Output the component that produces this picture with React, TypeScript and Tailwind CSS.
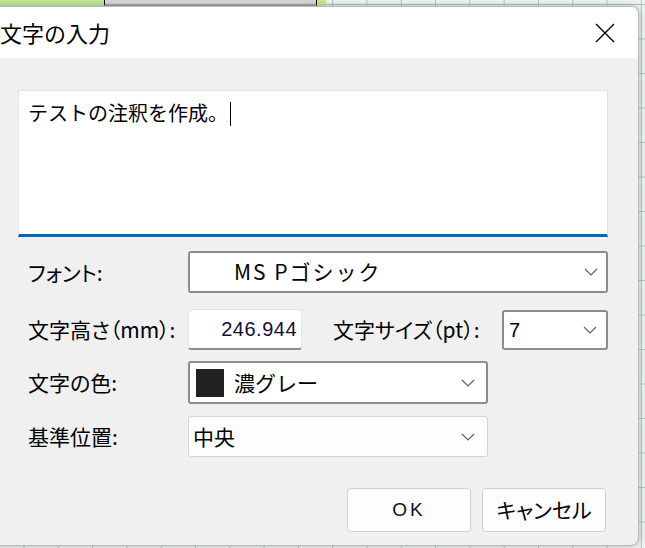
const jp = "font-['Noto_Sans_CJK_JP','Noto_Sans',sans-serif]";
const palt = "[font-feature-settings:'palt']";

// 細い下向きシェブロン（Windows のコンボボックス風）
const Chevron = () => (
  <svg width="14" height="8" viewBox="0 0 14 8" fill="none" aria-hidden>
    <path d="M1 1l6 6 6-6" stroke="#5f5f5f" strokeWidth="1.2" />
  </svg>
);

const CloseIcon = () => (
  <svg width="20" height="20" viewBox="0 0 20 20" fill="none" aria-hidden>
    <path d="M1 1l18 18M19 1L1 19" stroke="#000" strokeWidth="1.4" />
  </svg>
);

const Label = ({ children }: { children: React.ReactNode }) => (
  <span className={`w-[170px] shrink-0 pl-[10px] text-[21px] leading-none text-black ${palt}`}>{children}</span>
);

export default function App() {
  return (
    <div
      className={`relative h-[548px] w-[645px] overflow-hidden bg-[#eef3ef] bg-[linear-gradient(to_right,#a9c4b6_1px,transparent_1px),linear-gradient(to_bottom,#a9c4b6_1px,transparent_1px)] bg-[size:34.3px_34.5px] bg-[position:23.5px_4px] ${jp}`}
    >
      {/* 背後のウィンドウの端 */}
      <div className="flex h-[6px]">
        <div className="w-[104px] bg-[#c4e59c]" />
        <div className="w-[213px] border-x border-black border-b-2 border-b-[#a3a3a3] bg-[#d6d6d6]" />
        <div className="w-[9px] bg-[#c4e59c]" />
      </div>

      {/* ダイアログ */}
      <div className="absolute left-[-14px] top-[6px] flex h-[540px] w-[653px] flex-col overflow-hidden rounded-[8px] border border-[#b9b9b9] bg-[#f0f0f0] shadow-[0_0_6px_rgba(0,0,0,0.25)]">
        <div className="flex h-[51px] shrink-0 items-center justify-between bg-white pl-[13px] pr-[23px]">
          <span className="text-[22px] text-black">文字の入力</span>
          <CloseIcon />
        </div>

        <div className="flex flex-col pl-[31px] pr-[30px] pt-[32px]">
          {/* テキスト入力 */}
          <div className="h-[147px] w-[590px] border-x border-t border-[#e2e2e2] border-b-[3px] border-b-[#0067c0] bg-white px-[9px] pt-[6px]">
            <span className="text-[20px] leading-[30px] text-black">テストの注釈を作成。</span>
            <span className="ml-[2px] inline-block h-[24px] w-px translate-y-[5px] bg-black" />
          </div>

          {/* フォント */}
          <div className="mt-[14px] flex items-center">
            <Label>フォント:</Label>
            <div className="flex h-[42px] w-[420px] items-center justify-between rounded-[3px] border-2 border-[#8c8c8c] bg-white pl-[44px] pr-[8px]">
              <span className="text-[21px] tracking-[2px] text-black">MS Pゴシック</span>
              <Chevron />
            </div>
          </div>

          {/* 文字高さ / 文字サイズ */}
          <div className="mt-[16px] flex items-center">
            <Label>文字高さ（mm）:</Label>
            <div className="flex h-[41px] w-[114px] items-center justify-end rounded-[3px] border border-[#e3e3e3] border-b-2 border-b-[#8d8d8d] bg-white pr-[4px]">
              <span className="font-['Liberation_Sans',sans-serif] text-[20px] tracking-[0.5px] text-[#101030]">246.944</span>
            </div>
            <span className={`ml-[31px] w-[169px] shrink-0 text-[21px] text-black ${palt}`}>文字サイズ（pt）:</span>
            <div className="flex h-[40px] w-[106px] items-center justify-between rounded-[3px] border-2 border-[#8c8c8c] bg-white pl-[5px] pr-[9px]">
              <span className="font-['Liberation_Sans',sans-serif] text-[20px] text-black">7</span>
              <Chevron />
            </div>
          </div>

          {/* 文字の色 */}
          <div className="mt-[11px] flex items-center">
            <Label>文字の色:</Label>
            <div className="flex h-[43px] w-[300px] items-center justify-between rounded-[3px] border-2 border-[#8c8c8c] bg-white pl-[6px] pr-[11px]">
              <div className="flex items-center gap-[10px]">
                <span className="h-[28px] w-[28px] bg-[#222222]" />
                <span className="text-[21px] text-black">濃グレー</span>
              </div>
              <Chevron />
            </div>
          </div>

          {/* 基準位置 */}
          <div className="mt-[12px] flex items-center">
            <Label>基準位置:</Label>
            <div className="flex h-[41px] w-[300px] items-center justify-between rounded-[3px] border border-[#d3d3d3] bg-[#fdfdfd] pl-[4px] pr-[12px]">
              <span className="text-[21px] text-black">中央</span>
              <Chevron />
            </div>
          </div>

          {/* ボタン */}
          <div className="mt-[31px] flex justify-end gap-[11px] pr-[2px]">
            <button
              type="button"
              className="flex h-[44px] w-[124px] items-center justify-center rounded-[4px] border border-[#d0d0d0] bg-[#fdfdfd] font-['Liberation_Sans',sans-serif] text-[19px] tracking-[3px] text-[#101030]"
            >
              OK
            </button>
            <button
              type="button"
              className={`flex h-[44px] w-[124px] items-center justify-center rounded-[4px] border border-[#d0d0d0] bg-[#fdfdfd] text-[21px] text-black ${palt}`}
            >
              キャンセル
            </button>
          </div>
        </div>
      </div>
    </div>
  );
}
